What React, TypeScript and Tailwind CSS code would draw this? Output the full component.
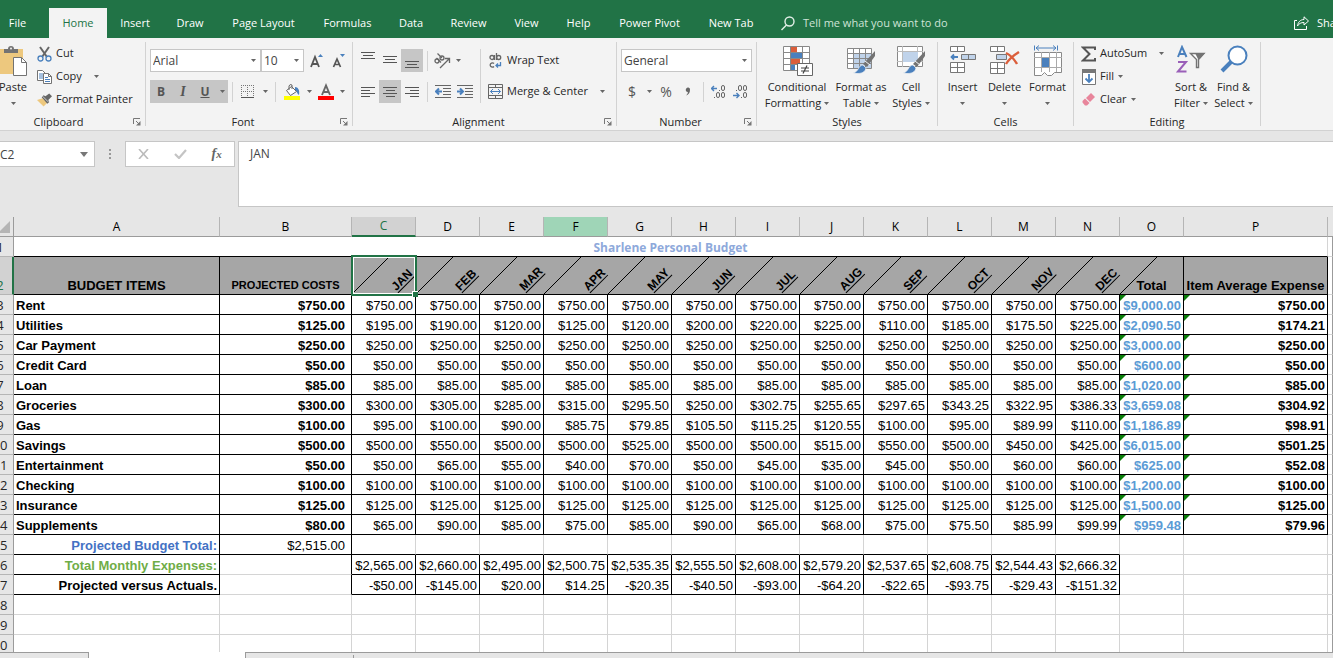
import type { ReactNode } from "react";

const MONTHS = ["JAN", "FEB", "MAR", "APR", "MAY", "JUN", "JUL", "AUG", "SEP", "OCT", "NOV", "DEC"];
const LETTERS = "ABCDEFGHIJKLMNOP".split("");

interface Item {
  name: string;
  projected: string;
  months: string[];
  total: string;
  average: string;
}

function item(name: string, projected: string, months: string, total: string, average: string): Item {
  return { name, projected, months: months.split(" "), total, average };
}

const ITEMS: Item[] = [
  item("Rent", "750.00", "750.00 750.00 750.00 750.00 750.00 750.00 750.00 750.00 750.00 750.00 750.00 750.00", "9,000.00", "750.00"),
  item("Utilities", "125.00", "195.00 190.00 120.00 125.00 120.00 200.00 220.00 225.00 110.00 185.00 175.50 225.00", "2,090.50", "174.21"),
  item("Car Payment", "250.00", "250.00 250.00 250.00 250.00 250.00 250.00 250.00 250.00 250.00 250.00 250.00 250.00", "3,000.00", "250.00"),
  item("Credit Card", "50.00", "50.00 50.00 50.00 50.00 50.00 50.00 50.00 50.00 50.00 50.00 50.00 50.00", "600.00", "50.00"),
  item("Loan", "85.00", "85.00 85.00 85.00 85.00 85.00 85.00 85.00 85.00 85.00 85.00 85.00 85.00", "1,020.00", "85.00"),
  item("Groceries", "300.00", "300.00 305.00 285.00 315.00 295.50 250.00 302.75 255.65 297.65 343.25 322.95 386.33", "3,659.08", "304.92"),
  item("Gas", "100.00", "95.00 100.00 90.00 85.75 79.85 105.50 115.25 120.55 100.00 95.00 89.99 110.00", "1,186.89", "98.91"),
  item("Savings", "500.00", "500.00 550.00 500.00 500.00 525.00 500.00 500.00 515.00 550.00 500.00 450.00 425.00", "6,015.00", "501.25"),
  item("Entertainment", "50.00", "50.00 65.00 55.00 40.00 70.00 50.00 45.00 35.00 45.00 50.00 60.00 60.00", "625.00", "52.08"),
  item("Checking", "100.00", "100.00 100.00 100.00 100.00 100.00 100.00 100.00 100.00 100.00 100.00 100.00 100.00", "1,200.00", "100.00"),
  item("Insurance", "125.00", "125.00 125.00 125.00 125.00 125.00 125.00 125.00 125.00 125.00 125.00 125.00 125.00", "1,500.00", "125.00"),
  item("Supplements", "80.00", "65.00 90.00 85.00 75.00 85.00 90.00 65.00 68.00 75.00 75.50 85.99 99.99", "959.48", "79.96"),
];

const EXPENSES = "$2,565.00 $2,660.00 $2,495.00 $2,500.75 $2,535.35 $2,555.50 $2,608.00 $2,579.20 $2,537.65 $2,608.75 $2,544.43 $2,666.32".split(" ");
const VERSUS = "-$50.00 -$145.00 $20.00 $14.25 -$20.35 -$40.50 -$93.00 -$64.20 -$22.65 -$93.75 -$29.43 -$151.32".split(" ");

const TABS = [
  { label: "File", width: "w-[35px] mr-[14px]" },
  { label: "Home", width: "w-[58px]" },
  { label: "Insert", width: "w-[56px]" },
  { label: "Draw", width: "w-[54px]" },
  { label: "Page Layout", width: "w-[93px]" },
  { label: "Formulas", width: "w-[75px]" },
  { label: "Data", width: "w-[52px]" },
  { label: "Review", width: "w-[63px]" },
  { label: "View", width: "w-[53px]" },
  { label: "Help", width: "w-[51px]" },
  { label: "Power Pivot", width: "w-[91px]" },
  { label: "New Tab", width: "w-[72px]" },
];

/* ---------- icons ---------- */

function Caret() {
  return (
    <svg width="5" height="3" viewBox="0 0 5 3" className="shrink-0">
      <path d="M0 0h5L2.5 3z" fill="#666" />
    </svg>
  );
}

function PasteIcon() {
  return (
    <svg width="30" height="32" viewBox="0 0 30 32">
      <path d="M1 4h24v25H1z" fill="#edc87e" />
      <path d="M6 8V4h4a3 3 0 0 1 6 0h4v4z" fill="#737373" />
      <circle cx="13" cy="3.500" r="1" fill="#f3f3f3" />
      <path d="M15.500 12.500h8l5 5v13h-13z" fill="#fff" stroke="#737373" />
      <path d="M23.500 12.500v5h5" fill="none" stroke="#737373" />
    </svg>
  );
}

function CutIcon() {
  return (
    <svg width="15" height="16" viewBox="0 0 15 16" fill="none">
      <path d="M3 1l7 10M12 1L5 11" stroke="#666" strokeWidth="2" />
      <circle cx="3.500" cy="12.500" r="2.500" stroke="#4a80bd" strokeWidth="1.300" />
      <circle cx="11.500" cy="12.500" r="2.500" stroke="#4a80bd" strokeWidth="1.300" />
    </svg>
  );
}

function CopyIcon() {
  return (
    <svg width="15" height="14" viewBox="0 0 15 14" fill="#fff" stroke="#737373">
      <path d="M.5.5h5l3 3v7h-8z" />
      <path d="M2 4h4M2 6h4M2 8h4" stroke="#4a80bd" />
      <path d="M6.500 3.500h5l3 3v7h-8z" />
      <path d="M11.500 3.500v3h3" fill="none" />
      <path d="M8 7.500h3M8 9.500h5M8 11.500h5" stroke="#4a80bd" />
    </svg>
  );
}

function PainterIcon() {
  return (
    <svg width="16" height="14" viewBox="0 0 16 14">
      <path d="M0 7l6-2 5 5-4 4z" fill="#edc87e" />
      <path d="M5 4l2-2 2 1 4-3 3 3-4 4 1 2-2 2z" fill="#666" />
      <path d="M6 3l6 6" stroke="#f3f3f3" strokeWidth=".8" />
    </svg>
  );
}

function LauncherIcon() {
  return (
    <svg width="8" height="8" viewBox="0 0 8 8" fill="none" stroke="#777">
      <path d="M.5 6V.5H7" />
      <path d="M3 3l3 3" />
      <path d="M7.500 3v4.500H3z" fill="#777" stroke="none" />
    </svg>
  );
}

function GrowIcon({ down = false }: { down?: boolean }) {
  return (
    <svg width="14" height="16" viewBox="0 0 14 16">
      {down ? (
        <>
          <path d="M1.500 14L5 6l3.500 8M3 11.500h4" fill="none" stroke="#555" strokeWidth="1.700" />
          <path d="M8 1h5l-2.500 3z" fill="#4a80bd" />
        </>
      ) : (
        <>
          <path d="M1 14L5 4l4 10M2.500 11h5" fill="none" stroke="#555" strokeWidth="1.800" />
          <path d="M8 4h5l-2.500-3z" fill="#4a80bd" />
        </>
      )}
    </svg>
  );
}

function BordersIcon() {
  return (
    <svg width="13" height="14" viewBox="0 0 13 14" fill="none" stroke="#777">
      <path d="M.5 0v12M6.500 0v12M12.500 0v12M0 .5h13M0 6.500h13" strokeDasharray="1 1" />
      <path d="M0 12.500h13" stroke="#555" />
    </svg>
  );
}

function FillColorIcon() {
  return (
    <svg width="16" height="17" viewBox="0 0 16 17">
      <path d="M11 4c3 0 5 3 4 8-2-1-2-4-4-5z" fill="#4a80bd" />
      <path d="M2.500 7.500l5-4 5 5-6 4z" fill="#fff" stroke="#666" />
      <path d="M5 7V3a2 2 0 0 1 3-1v4" fill="none" stroke="#666" />
      <path d="M0 13h16v4H0z" fill="#ff0" />
    </svg>
  );
}

function FontColorIcon() {
  return (
    <svg width="16" height="17" viewBox="0 0 16 17">
      <path d="M4 12L8 2.500l4 9.500M5 9h6" fill="none" stroke="#666" strokeWidth="1.900" />
      <path d="M0 13h16v4H0z" fill="red" />
    </svg>
  );
}

function Lines({ d, tall = false }: { d: string; tall?: boolean }) {
  return (
    <svg width="14" height={tall ? 23 : 12} viewBox={tall ? "0 0 14 23" : "0 0 14 12"}>
      <path d={d} stroke="#555" fill="none" />
    </svg>
  );
}

function OrientationIcon() {
  return (
    <svg width="17" height="16" viewBox="0 0 17 16" fill="none" stroke="#666" strokeWidth="1.300">
      <circle cx="3" cy="8" r="2" />
      <path d="M2.500 5l4.500 4.500" />
      <circle cx="8" cy="5" r="2" />
      <path d="M3.500 .5l4.500 4.500" />
      <path d="M6 15l9-9M11 5.500h4.500V10" />
    </svg>
  );
}

function IndentIcon({ right = false }: { right?: boolean }) {
  return (
    <svg width="16" height="14" viewBox="0 0 16 14" fill="none">
      <path d="M0 .5h16M8 3.500h8M8 6.500h8M8 9.500h8M0 12.500h16" stroke="#666" />
      <path d={right ? "M0 6.500h5M3 3.500l3 3-3 3" : "M2 6.500h5M4 3.500l-3 3 3 3"} stroke="#4a80bd" strokeWidth="2" />
    </svg>
  );
}

function WrapIcon() {
  return (
    <svg width="13" height="17" viewBox="0 0 13 17" fill="none" stroke="#666" strokeWidth="1.300">
      <circle cx="3" cy="5.500" r="2" />
      <path d="M5.500 3v5M7.500 1v7" />
      <circle cx="9.700" cy="5.500" r="2" />
      <path d="M5 11.500a2.200 2.200 0 1 0 0 3" />
      <path d="M11.500 10v3.500H7M9 11.500l-2 2 2 2" stroke="#4a80bd" />
    </svg>
  );
}

function MergeIcon() {
  return (
    <svg width="15" height="15" viewBox="0 0 15 15" fill="none" stroke="#666">
      <path d="M.5.5h14v14H.5zM.5 3.500h14M.5 11.500h14M7.500.5v3M7.500 11.500v3" />
      <path d="M2.500 7.500h10M5 5L2.500 7.500 5 10M10 5l2.500 2.500L10 10" stroke="#4a80bd" />
    </svg>
  );
}

/* the digits are strokes of the glyph: a dot followed by narrow zeros */
function DecimalIcon({ less = false }: { less?: boolean }) {
  return (
    <svg width="16" height="14" viewBox="0 0 16 14" fill="none" stroke="#666">
      <path d={less ? "M0 10.500h6M3.500 8L6 10.500 3.500 13" : "M1 3.500h5M3 1L.5 3.500 3 6"} stroke="#4a80bd" strokeWidth="1.400" />
      {less ? (
        <>
          <path d="M3 5.500h1M8 10.500h1M8 12.500h1" strokeWidth="0" />
          <rect x="3" y="5" width="1" height="1" fill="#666" stroke="none" />
          <rect x="5.500" y=".5" width="3" height="5" rx="1.500" />
          <rect x="10.500" y=".5" width="3" height="5" rx="1.500" />
          <rect x="8" y="12" width="1" height="1" fill="#666" stroke="none" />
          <rect x="10.500" y="7.500" width="3" height="5" rx="1.500" />
        </>
      ) : (
        <>
          <rect x="8" y="5" width="1" height="1" fill="#666" stroke="none" />
          <rect x="10.500" y=".5" width="3" height="5" rx="1.500" />
          <rect x="3" y="12" width="1" height="1" fill="#666" stroke="none" />
          <rect x="5.500" y="7.500" width="3" height="5" rx="1.500" />
          <rect x="10.500" y="7.500" width="3" height="5" rx="1.500" />
        </>
      )}
    </svg>
  );
}

function Brush() {
  return (
    <g>
      <path d="M29 6L17 19l4 3 8-11z" fill="#737373" />
      <path d="M19 16l5 4" stroke="#f3f3f3" />
      <path d="M17 20c-5 0-4 7-10 8 5 1 12 1 13-5z" fill="#4a80bd" stroke="#f3f3f3" strokeWidth=".7" />
    </g>
  );
}

function ConditionalIcon() {
  return (
    <svg width="31" height="31" viewBox="0 0 31 31">
      <path d="M1 1h27v24H1z" fill="#fff" />
      <path d="M1.500 1.500h26v24h-26zM1 7.500h27M1 13.500h27M1 19.500h27M8.500 1v24M20.500 1v24" fill="none" stroke="#888" />
      <path d="M9 2h6v5H9zM9 14h9v5H9z" fill="#db5e3b" />
      <path d="M9 8h11v5H9zM9 20h4v5H9z" fill="#4a80bd" />
      <path d="M15.500 18.500h15v12h-15z" fill="#fff" stroke="#666" />
      <path d="M19 23h8M19 26h8M25 20.500l-4 8" stroke="#444" strokeWidth="1.200" />
    </svg>
  );
}

function FormatTableIcon() {
  return (
    <svg width="30" height="31" viewBox="0 0 30 31">
      <path d="M1.500 3.500h24v20h-24z" fill="#fff" />
      <path d="M8 8h18v15H8z" fill="#c0d3ea" />
      <path d="M1.500 3.500h24v20h-24zM1 8.500h25M1 13.500h25M1 18.500h25M7.500 3v20M13.500 3v20M19.500 3v20" fill="none" stroke="#888" />
      <Brush />
    </svg>
  );
}

function CellStylesIcon() {
  return (
    <svg width="30" height="31" viewBox="0 0 30 31">
      <path d="M1.500 1.500h25v20h-25z" fill="#fff" stroke="#888" />
      <path d="M1 6.500h26M1 16.500h26M6.500 1v21M21.500 1v21" stroke="#bbb" />
      <path d="M7 7h15v10H7z" fill="#c0d3ea" />
      <Brush />
    </svg>
  );
}

function InsertIcon() {
  return (
    <svg width="28" height="30" viewBox="0 0 28 30" fill="#fff" stroke="#777">
      <path d="M1.500 1.500h14v5h-14zM8.500 1.500v5M1.500 17.500h14v10h-14zM1.500 22.500h14M8.500 17.500v10" />
      <path d="M12.500 9.500h14v5h-14z" fill="#c0d3ea" />
      <path d="M19.500 9.500v5" />
      <path d="M3 12h6M5 9.500L2.500 12 5 14.500" fill="none" stroke="#4a80bd" strokeWidth="1.800" />
    </svg>
  );
}

function DeleteIcon() {
  return (
    <svg width="31" height="30" viewBox="0 0 31 30" fill="#fff" stroke="#777">
      <path d="M1.500 1.500h14v5h-14zM8.500 1.500v5M1.500 17.500h14v11h-14zM1.500 23.500h14M8.500 17.500v11" />
      <path d="M7.500 9.500h10v5h-10z" fill="#c0d3ea" />
      <path d="M17 8c5 2 8 6 11 11M30 7c-5 3-10 7-13 12" fill="none" stroke="#db5e3b" strokeWidth="2.400" />
    </svg>
  );
}

function FormatIcon() {
  return (
    <svg width="30" height="32" viewBox="0 0 30 32" fill="#fff" stroke="#888">
      <path d="M1.500.5v5M24.500.5v5M3 3h20M6 .5L3 3l3 2.500M20 .5L23 3l-3 2.500" stroke="#4a80bd" fill="none" />
      <path d="M1.500 7.500h27v20h-7l-3 3h-4l-3-3-3 3h-7z" />
      <path d="M1 12.500h28M1 22.500h28M8.500 7v20M16.500 7v20M23.500 7v20" stroke="#aaa" />
      <path d="M9 13h7v9H9z" fill="#4a80bd" stroke="none" />
    </svg>
  );
}

function SumIcon() {
  return (
    <svg width="15" height="16" viewBox="0 0 15 16" fill="none" stroke="#555" strokeWidth="2">
      <path d="M14 4V1.500H2L8.500 8 2 14.500h12V12" />
    </svg>
  );
}

function FillIcon() {
  return (
    <svg width="14" height="16" viewBox="0 0 14 16">
      <path d="M.5.5h13v15H.5z" fill="#fff" stroke="#777" />
      <path d="M0 0h14v4H0z" fill="#777" />
      <path d="M7 5v8M3.500 9.500L7 13l3.500-3.500" fill="none" stroke="#4a80bd" strokeWidth="1.800" />
    </svg>
  );
}

function ClearIcon() {
  return (
    <svg width="14" height="13" viewBox="0 0 14 13">
      <path d="M9 0l4 4-5 5-4-4z" fill="#e8859b" />
      <path d="M3 5.500L7.500 10 5 12.500H3L.5 9.500V8z" fill="#e8859b" />
    </svg>
  );
}

function SortIcon() {
  return (
    <svg width="30" height="29" viewBox="0 0 30 29" fill="none" strokeWidth="2">
      <path d="M2 12L6 2l4.500 10M3 9h6.500" stroke="#4a80bd" />
      <path d="M2 17h8L2 26.500h8.500" stroke="#9a5fb8" />
      <path d="M14.500 8.500h13.500l-5.500 6v8h-2v-8z" fill="#fff" stroke="#737373" strokeWidth="1.400" />
      <path d="M19 8h10l-6.500 7z" fill="#737373" />
    </svg>
  );
}

function FindIcon() {
  return (
    <svg width="28" height="28" viewBox="0 0 28 28">
      <path d="M12 16L2 26" stroke="#4a80bd" strokeWidth="4" />
      <circle cx="17.500" cy="10.500" r="9" fill="#fff" stroke="#4a80bd" strokeWidth="2" />
    </svg>
  );
}

/* ---------- ribbon ---------- */

function Group({ label, width, labelPad = "", launcher, children }: { label: string; width: string; labelPad?: string; launcher?: boolean; children: ReactNode }) {
  return (
    <section aria-label={label} className={`${width} shrink-0 h-[84px] border-r border-[#d2d2d2]`}>
      <div className="h-[72px]">{children}</div>
      <div className="flex items-center h-4 pr-1">
        <span className={`flex-1 text-center leading-4 ${labelPad}`}>{label}</span>
        {launcher && <LauncherIcon />}
      </div>
    </section>
  );
}

function BigButton({ icon, lines, width, inline }: { icon: ReactNode; lines: string[]; width: string; inline?: boolean }) {
  return (
    <button className={`${width} shrink-0 flex flex-col items-center whitespace-nowrap`}>
      <span className="h-[37px] pt-[3px]">{icon}</span>
      {lines.map((line, i) => (
        <span key={line} className="flex items-center gap-[3px] leading-4">
          {line}
          {inline && i === lines.length - 1 && <Caret />}
        </span>
      ))}
      {!inline && <span className="h-4 flex items-center"><Caret /></span>}
    </button>
  );
}

function SmallButton({ icon, label, caret, gap = "gap-1" }: { icon: ReactNode; label: string; caret?: boolean; gap?: string }) {
  return (
    <button className={`flex items-center h-[23px] whitespace-nowrap ${gap}`}>
      <span className="flex items-center gap-1">
        <span className="w-[15px] flex justify-center">{icon}</span>
        {label}
      </span>
      {caret && <Caret />}
    </button>
  );
}

function IconButton({ label, width = "w-[22px]", active, children }: { label: string; width?: string; active?: boolean; children: ReactNode }) {
  return (
    <button aria-label={label} className={`${width} shrink-0 h-[23px] flex items-center justify-center ${active ? "bg-[#c6c6c6]" : ""}`}>
      {children}
    </button>
  );
}

function Divider() {
  return <span className="w-px h-5 bg-[#d2d2d2] shrink-0" />;
}

function Combo({ label, value, width }: { label: string; value: string; width: string }) {
  return (
    <label className={`${width} relative shrink-0 block h-[23px]`}>
      <select aria-label={label} className="w-full h-full appearance-none bg-white border border-[#c6c6c6] pl-[2px] text-xs text-[#444] outline-none">
        <option>{value}</option>
      </select>
      <span className="absolute right-[5px] inset-y-0 flex items-center pointer-events-none"><Caret /></span>
    </label>
  );
}

function Ribbon() {
  return (
    <div className="flex h-[93px] shrink-0 pt-1 bg-[#f3f3f3] border-b border-[#d2d2d2] text-[#262626]">
      <Group label="Clipboard" width="w-[146px]" labelPad="pr-4" launcher>
        <div className="flex">
          <BigButton icon={<PasteIcon />} lines={["Paste"]} width="w-[26px]" />
          <div className="pl-[11px]">
            <SmallButton icon={<CutIcon />} label="Cut" />
            <SmallButton icon={<CopyIcon />} label="Copy" caret gap="gap-3" />
            <SmallButton icon={<PainterIcon />} label="Format Painter" />
          </div>
        </div>
      </Group>

      <Group label="Font" width="w-[207px]" launcher>
        <div className="flex flex-col gap-2 pt-[7px] pl-1">
          <div className="flex">
            <Combo label="Font" value="Arial" width="w-[111px]" />
            <Combo label="Font size" value="10" width="w-[43px]" />
            <span className="w-[2px]" />
            <IconButton label="Increase font size"><GrowIcon /></IconButton>
            <IconButton label="Decrease font size"><GrowIcon down /></IconButton>
          </div>
          <div className="flex items-center">
            <IconButton label="Bold" active><b className="text-xs text-[#555]">B</b></IconButton>
            <IconButton label="Italic" active><i className="font-['Liberation_Serif',serif] text-sm font-bold text-[#555]">I</i></IconButton>
            <IconButton label="Underline" active><u className="text-xs font-bold text-[#555]">U</u></IconButton>
            <IconButton label="Underline style" width="w-3" active><Caret /></IconButton>
            <span className="w-1" />
            <Divider />
            <IconButton label="Borders" width="w-7"><BordersIcon /></IconButton>
            <IconButton label="Border style" width="w-2"><Caret /></IconButton>
            <span className="w-[6px]" />
            <Divider />
            <IconButton label="Fill color" width="w-[31px]"><FillColorIcon /></IconButton>
            <IconButton label="Fill colors" width="w-1"><Caret /></IconButton>
            <IconButton label="Font color" width="w-[29px]"><FontColorIcon /></IconButton>
            <IconButton label="Font colors" width="w-1"><Caret /></IconButton>
          </div>
        </div>
      </Group>

      <Group label="Alignment" width="w-[264px]" launcher>
        <div className="flex pt-[7px] pl-1">
          <div className="flex flex-col gap-2">
            <div className="flex items-center">
              <IconButton label="Top align"><Lines tall d="M0 3.500h14M2 6.500h10M0 9.500h14" /></IconButton>
              <IconButton label="Middle align"><Lines tall d="M0 7.500h14M2 10.500h10M0 13.500h14" /></IconButton>
              <IconButton label="Bottom align" active><Lines tall d="M0 12.500h14M2 15.500h10M0 18.500h14" /></IconButton>
              <span className="w-1" />
              <Divider />
              <IconButton label="Orientation" width="w-7"><OrientationIcon /></IconButton>
              <Caret />
            </div>
            <div className="flex items-center">
              <IconButton label="Align left"><Lines d="M0 1.500h14M0 4.500h9M0 7.500h14M0 10.500h9" /></IconButton>
              <IconButton label="Center" active><Lines d="M0 1.500h14M3 4.500h9M0 7.500h14M3 10.500h9" /></IconButton>
              <IconButton label="Align right"><Lines d="M0 1.500h14M5 4.500h9M0 7.500h14M5 10.500h9" /></IconButton>
              <span className="w-1" />
              <Divider />
              <span className="w-1" />
              <IconButton label="Decrease indent"><IndentIcon /></IconButton>
              <IconButton label="Increase indent"><IndentIcon right /></IconButton>
            </div>
          </div>
          <div className="flex flex-col gap-2 ml-1 pl-[7px] border-l border-[#d2d2d2]">
            <SmallButton icon={<WrapIcon />} label="Wrap Text" />
            <SmallButton icon={<MergeIcon />} label="Merge & Center" caret gap="gap-3" />
          </div>
        </div>
      </Group>

      <Group label="Number" width="w-[140px]" launcher>
        <div className="flex flex-col gap-2 pt-[7px] pl-1">
          <Combo label="Number format" value="General" width="w-[131px]" />
          <div className="flex items-center text-sm text-[#555]">
            <IconButton label="Accounting format">$</IconButton>
            <IconButton label="Currencies" width="w-3"><Caret /></IconButton>
            <IconButton label="Percent style">%</IconButton>
            <IconButton label="Comma style">
              <svg width="6" height="9" viewBox="0 0 6 9"><path d="M1 2a2 2 0 1 1 4 1C5 6 3.500 7.500 1 8.500 2.500 7 3 6 2.800 5A2 2 0 0 1 1 2z" fill="#666" /></svg>
            </IconButton>
            <span className="w-1" />
            <Divider />
            <span className="w-1" />
            <IconButton label="Increase decimal"><DecimalIcon /></IconButton>
            <IconButton label="Decrease decimal"><DecimalIcon less /></IconButton>
          </div>
        </div>
      </Group>

      <Group label="Styles" width="w-[181px]" labelPad="pl-1">
        <div className="flex pl-1">
          <BigButton icon={<ConditionalIcon />} lines={["Conditional", "Formatting"]} width="w-[72px]" inline />
          <BigButton icon={<FormatTableIcon />} lines={["Format as", "Table"]} width="w-14" inline />
          <BigButton icon={<CellStylesIcon />} lines={["Cell", "Styles"]} width="w-11" inline />
        </div>
      </Group>

      <Group label="Cells" width="w-[136px]" labelPad="pl-1">
        <div className="flex pl-1">
          <BigButton icon={<InsertIcon />} lines={["Insert"]} width="w-[41px]" />
          <BigButton icon={<DeleteIcon />} lines={["Delete"]} width="w-[43px]" />
          <BigButton icon={<FormatIcon />} lines={["Format"]} width="w-[43px]" />
        </div>
      </Group>

      <Group label="Editing" width="w-[187px]" labelPad="pl-1">
        <div className="flex">
          <div className="w-[96px] pl-[7px]">
            <SmallButton icon={<SumIcon />} label="AutoSum" caret gap="gap-3" />
            <SmallButton icon={<FillIcon />} label="Fill" caret />
            <SmallButton icon={<ClearIcon />} label="Clear" caret />
          </div>
          <BigButton icon={<SortIcon />} lines={["Sort &", "Filter"]} width="w-[42px]" inline />
          <BigButton icon={<FindIcon />} lines={["Find &", "Select"]} width="w-[43px]" inline />
        </div>
      </Group>
    </div>
  );
}

function TabBar() {
  return (
    <header className="flex items-end h-[38px] shrink-0 bg-[#217346] text-white whitespace-nowrap overflow-hidden">
      <nav className="flex">
        {TABS.map((t) => (
          <button key={t.label} className={`${t.width} h-[30px] text-center ${t.label === "Home" ? "bg-[#f3f3f3] text-[#217346]" : ""}`}>
            {t.label}
          </button>
        ))}
      </nav>
      <button className="flex items-center gap-2 h-[30px] pl-[14px] text-[#cfe3d7]">
        <svg width="14" height="15" viewBox="0 0 14 15" fill="none" stroke="#e3efe8" strokeWidth="1.400">
          <circle cx="8.500" cy="5.500" r="4.500" />
          <path d="M5.500 9L.5 14" />
        </svg>
        Tell me what you want to do
      </button>
      <span className="flex-1" />
      <button className="flex items-center gap-2 h-[30px] w-[39px] shrink-0">
        <svg width="15" height="14" viewBox="0 0 15 14" fill="none" stroke="#fff" className="shrink-0">
          <path d="M3 4.500H.5v9h12V10" />
          <path d="M10 .8L14.500 5 10 9V6.500C7 6.500 5 7.500 3.500 10 4 6 6.500 3.500 10 3.500z" />
        </svg>
        Share
      </button>
    </header>
  );
}

function FormulaBar() {
  return (
    <div className="flex items-start shrink-0 h-[86px] pt-[10px] text-xs text-[#444]">
      <div className="relative w-[95px] shrink-0">
        <input aria-label="Name box" defaultValue="C2" className="block w-full h-[26px] bg-white border border-l-0 border-[#c6c6c6] outline-none" />
        <span className="absolute right-[7px] inset-y-0 flex items-center">
          <svg width="8" height="5" viewBox="0 0 8 5"><path d="M0 0h8L4 5z" fill="#777" /></svg>
        </span>
      </div>
      <div className="w-[30px] h-[26px] flex flex-col items-center justify-center gap-[2px]">
        <span className="w-[2px] h-[2px] bg-[#999]" />
        <span className="w-[2px] h-[2px] bg-[#999]" />
        <span className="w-[2px] h-[2px] bg-[#999]" />
      </div>
      <div className="w-[110px] shrink-0 h-[26px] mr-[3px] flex items-center justify-around bg-white border border-[#c6c6c6]">
        <button aria-label="Cancel">
          <svg width="11" height="10" viewBox="0 0 11 10"><path d="M1 0l9 10M10 0L1 10" stroke="#bbb" strokeWidth="1.600" /></svg>
        </button>
        <button aria-label="Enter">
          <svg width="13" height="10" viewBox="0 0 13 10"><path d="M1 5l4 4 7-8" fill="none" stroke="#c4c4c4" strokeWidth="2.200" /></svg>
        </button>
        <button aria-label="Insert function" className="font-['Liberation_Serif',serif] italic font-bold text-sm leading-4 text-[#666]">
          f<span className="text-[11px]">x</span>
        </button>
      </div>
      <textarea aria-label="Formula" defaultValue="JAN" className="flex-1 h-[66px] resize-none bg-white border border-r-0 border-[#c6c6c6] pl-[11px] pt-1 leading-4 outline-none" />
    </div>
  );
}

/* ---------- sheet ---------- */

const CELL = "border-r border-b p-0 pt-[2px] whitespace-nowrap";
const BLACK = "border-black";
const LIGHT = "border-[#d4d4d4]";

function RowHead({ n }: { n: number }) {
  const active = n === 2;
  return (
    <th
      scope="row"
      className={`p-0 border-b border-b-[#b5b5b5] font-normal align-bottom leading-[18px] font-['Open_Sans',sans-serif] ${
        active ? "bg-[#d2d2d2] text-[#217346] border-r-2 border-r-[#217346]" : "bg-[#e6e6e6] text-[#262626] border-r border-r-[#9b9b9b]"
      }`}
    >
      {/* the gutter is scrolled half out of view, so numbers centre on its left edge */}
      <div className="w-7 -ml-[14px] text-center">{n}</div>
    </th>
  );
}

function Edge() {
  return <td className={`${CELL} border-b-[#d4d4d4] border-r-[#9b9b9b]`} />;
}

function Flag() {
  return (
    <svg width="6" height="6" viewBox="0 0 6 6" className="absolute left-0 top-0">
      <path d="M0 0h6L0 6z" fill="#0a7d0a" />
    </svg>
  );
}

function Diagonal() {
  return (
    <svg width="38" height="38" viewBox="0 0 38 38" shapeRendering="crispEdges" className="absolute left-0 bottom-0">
      <path d="M0 38L38 0" stroke="#000" />
    </svg>
  );
}

function Sheet() {
  return (
    <div className="flex-1 min-h-0 overflow-hidden bg-white">
      <table className="w-full table-fixed border-separate border-spacing-0 font-['Liberation_Sans',Arial,sans-serif] text-[13px] leading-[17px] text-black">
        <colgroup>
          <col className="w-[14px]" />
          <col className="w-[206px]" />
          <col className="w-[132px]" />
          {LETTERS.slice(2, 15).map((l) => <col key={l} className="w-[64px]" />)}
          <col className="w-[144px]" />
          <col />
        </colgroup>
        <thead>
          <tr className="h-5 bg-[#e6e6e6] font-['Open_Sans',sans-serif] text-xs">
            <td className="p-0 border-r border-b border-[#9b9b9b] align-bottom">
              <svg width="11" height="12" viewBox="0 0 11 12" className="mb-[3px]"><path d="M10 0v12H-2z" fill="#b5b5b5" /></svg>
            </td>
            {LETTERS.map((l) => (
              <th
                key={l}
                scope="col"
                className={`p-0 font-normal border-r border-r-[#b5b5b5] ${
                  l === "C" ? "bg-[#d2d2d2] text-[#217346] border-b-2 border-b-[#217346]" : "border-b border-b-[#9b9b9b]"
                } ${l === "F" ? "bg-[#9fd5b7]" : ""}`}
              >
                {l}
              </th>
            ))}
            <td className="p-0 border-b border-[#9b9b9b]" />
          </tr>
        </thead>
        <tbody>
          <tr className="h-5">
            <RowHead n={1} />
            <td colSpan={16} className="p-0 pt-[2px] border-r border-r-[#d4d4d4] border-b border-b-black text-center font-bold text-[#8ea9db] font-['Open_Sans',sans-serif] text-xs leading-[17px]">
              Sharlene Personal Budget
            </td>
            <Edge />
          </tr>
          <tr className="h-[38px] bg-[#a6a6a6] align-bottom font-bold">
            <RowHead n={2} />
            <td className={`${CELL} ${BLACK} text-center`}>BUDGET ITEMS</td>
            <td className={`${CELL} ${BLACK} text-center text-[11px] leading-[17px]`}>PROJECTED COSTS</td>
            {MONTHS.map((m) => (
              <td key={m} className="relative p-0 border-b border-black">
                <Diagonal />
                <span className="absolute left-[47px] bottom-0 origin-bottom-left -rotate-45 underline decoration-1 underline-offset-2 text-xs leading-4">{m}</span>
                {m === "JAN" && (
                  <>
                    <span className="absolute z-10 -left-px -top-[2px] -right-px -bottom-[2px] border-2 border-[#217346]">
                      <span className="block w-full h-full border border-white" />
                    </span>
                    <span className="absolute z-10 -right-[2px] -bottom-[3px] w-[6px] h-[6px] bg-[#217346] border-l border-t border-white" />
                  </>
                )}
              </td>
            ))}
            <td className={`${CELL} ${BLACK} relative text-center`}>
              <Diagonal />
              Total
            </td>
            <td className={`${CELL} ${BLACK} text-center`}>Item Average Expense</td>
            <td className="bg-white border-r border-b border-b-[#d4d4d4] border-r-[#9b9b9b]" />
          </tr>

          {ITEMS.map((it, i) => (
            <tr key={it.name} className="h-5 text-right">
              <RowHead n={i + 3} />
              <td className={`${CELL} ${BLACK} text-left font-bold pl-[2px]`}>{it.name}</td>
              <td className={`${CELL} ${BLACK} font-bold pr-[6px]`}>${it.projected}</td>
              {it.months.map((v, m) => (
                <td key={m} className={`${CELL} ${BLACK} pr-[2px]`}>${v}</td>
              ))}
              <td className={`${CELL} ${BLACK} relative font-bold text-[#5b9bd5] pr-[2px]`}><Flag />${it.total}</td>
              <td className={`${CELL} ${BLACK} relative font-bold pr-[2px]`}><Flag />${it.average}</td>
              <Edge />
            </tr>
          ))}

          <tr className="h-5 text-right">
            <RowHead n={15} />
            <td className={`${CELL} ${BLACK} font-bold text-[#4472c4] pr-[2px]`}>Projected Budget Total:</td>
            <td className={`${CELL} ${BLACK} pr-[6px]`}>$2,515.00</td>
            {MONTHS.map((m) => <td key={m} className={`${CELL} border-r-[#d4d4d4] border-b-black`} />)}
            <td className={`${CELL} ${LIGHT}`} />
            <td className={`${CELL} ${LIGHT}`} />
            <Edge />
          </tr>
          <tr className="h-5 text-right">
            <RowHead n={16} />
            <td className={`${CELL} ${BLACK} font-bold text-[#70ad47] pr-[2px]`}>Total Monthly Expenses:</td>
            <td className={`${CELL} border-r-black border-b-[#d4d4d4]`} />
            {EXPENSES.map((v, m) => <td key={m} className={`${CELL} ${BLACK} pr-[2px]`}>{v}</td>)}
            <td className={`${CELL} ${LIGHT}`} />
            <td className={`${CELL} ${LIGHT}`} />
            <Edge />
          </tr>
          <tr className="h-5 text-right">
            <RowHead n={17} />
            <td className={`${CELL} ${BLACK} font-bold pr-[2px]`}>Projected versus Actuals.</td>
            <td className={`${CELL} border-r-black border-b-[#d4d4d4]`} />
            {VERSUS.map((v, m) => <td key={m} className={`${CELL} ${BLACK} pr-[2px]`}>{v}</td>)}
            <td className={`${CELL} ${LIGHT}`} />
            <td className={`${CELL} ${LIGHT}`} />
            <Edge />
          </tr>

          {[18, 19, 20].map((n) => (
            <tr key={n} className="h-5">
              <RowHead n={n} />
              {LETTERS.map((l) => <td key={l} className={`${CELL} ${LIGHT}`} />)}
              <Edge />
            </tr>
          ))}
        </tbody>
      </table>
    </div>
  );
}

export default function App() {
  return (
    <div className="flex flex-col h-screen overflow-hidden bg-[#e6e6e6] font-['Open_Sans','Noto_Sans',sans-serif] text-[11px]">
      <TabBar />
      <Ribbon />
      <FormulaBar />
      <Sheet />
      <footer className="flex h-[6px] shrink-0">
        <span className="w-[89px] border-t border-r border-[#9b9b9b]" />
        <span className="w-[156px] bg-white" />
        <span className="w-[109px] border-t border-l border-[#9b9b9b] flex justify-end items-end">
          <span className="w-px h-[3px] bg-[#9b9b9b]" />
        </span>
        <span className="flex-1 border-t border-[#9b9b9b]" />
      </footer>
    </div>
  );
}
